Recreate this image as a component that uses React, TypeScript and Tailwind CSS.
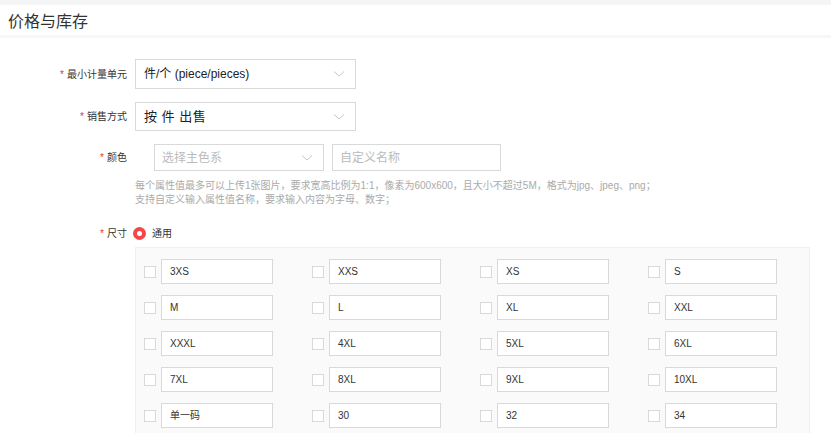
import React from "react";

const sizes = [
  "3XS", "XXS", "XS", "S",
  "M", "L", "XL", "XXL",
  "XXXL", "4XL", "5XL", "6XL",
  "7XL", "8XL", "9XL", "10XL",
  "单一码", "30", "32", "34",
];

function Chevron() {
  return (
    <svg width="12" height="8" viewBox="0 0 12 8" className="shrink-0">
      <path d="M1 1.5 L6 6 L11 1.5" fill="none" stroke="#c8c8c8" strokeWidth="1" />
    </svg>
  );
}

function Label({ text }: { text: string }) {
  return (
    <div className="w-[127px] shrink-0 text-right text-[10px] text-[#333]">
      <span className="text-[#e4393c] mr-[3px]">*</span>
      {text}
    </div>
  );
}

export default function App() {
  return (
    <div
      className="w-[831px] h-[433px] overflow-hidden bg-white"
      style={{ fontFamily: '"Liberation Sans", "Noto Sans CJK SC", sans-serif' }}
    >
      {/* header */}
      <div className="h-[5px] bg-[#f5f5f5]" />
      <div className="h-[33px] flex items-center px-2 pt-[3px] border-b-[3px] border-[#f7f7f7]">
        <span className="text-[16px] text-[#333]">价格与库存</span>
      </div>

      <div className="pt-[21px]">
        {/* 最小计量单元 */}
        <div className="flex items-center">
          <Label text="最小计量单元" />
          <div className="ml-2 w-[221px] h-[30px] border border-[#d9d9d9] flex items-center justify-between pl-[8px] pr-[10px]">
            <span className="text-[12px] text-[#222]">件/个 (piece/pieces)</span>
            <Chevron />
          </div>
        </div>

        {/* 销售方式 */}
        <div className="flex items-center mt-[13px]">
          <Label text="销售方式" />
          <div className="ml-2 w-[221px] h-[29px] border border-[#d9d9d9] flex items-center justify-between pl-[8px] pr-[10px]">
            <span className="text-[13px] text-[#222] tracking-[0.5px]">按 件 出售</span>
            <Chevron />
          </div>
        </div>

        {/* 颜色 */}
        <div className="flex items-center mt-[13px]">
          <Label text="颜色" />
          <div className="ml-[27px] w-[170px] h-[27px] border border-[#d9d9d9] flex items-center justify-between pl-[7px] pr-[10px]">
            <span className="text-[12px] text-[#bbb]">选择主色系</span>
            <Chevron />
          </div>
          <div className="ml-[8px] w-[169px] h-[27px] border border-[#d9d9d9] flex items-center pl-[7px]">
            <span className="text-[12px] text-[#bbb]">自定义名称</span>
          </div>
        </div>
        <div className="ml-[135px] mt-[8px] text-[10px] leading-[14px] text-[#aaa]">
          <div>每个属性值最多可以上传1张图片，要求宽高比例为1:1，像素为600x600，且大小不超过5M，格式为jpg、jpeg、png；</div>
          <div>支持自定义输入属性值名称，要求输入内容为字母、数字；</div>
        </div>

        {/* 尺寸 */}
        <div className="flex items-center mt-[19px]">
          <Label text="尺寸" />
          <div className="ml-[6px] w-[13px] h-[13px] rounded-full border-[4px] border-[#f0494b] bg-white" />
          <span className="ml-[6px] text-[10px] text-[#333]">通用</span>
        </div>

        <div className="ml-[135px] mt-[6px] w-[675px] h-[200px] bg-[#fafafa] border border-[#f0f0f0] pl-[8px] pt-[11px]">
          <div className="grid grid-cols-[168px_168px_168px_168px] gap-y-[11px]">
            {sizes.map((s) => (
              <div key={s} className="flex items-center">
                <div className="w-[12px] h-[12px] border border-[#d9d9d9] bg-white" />
                <div className="ml-[5px] w-[112px] h-[25px] border border-[#d9d9d9] bg-white flex items-center pl-[8px]">
                  <span className="text-[10px] text-[#333]">{s}</span>
                </div>
              </div>
            ))}
          </div>
        </div>
      </div>
    </div>
  );
}
